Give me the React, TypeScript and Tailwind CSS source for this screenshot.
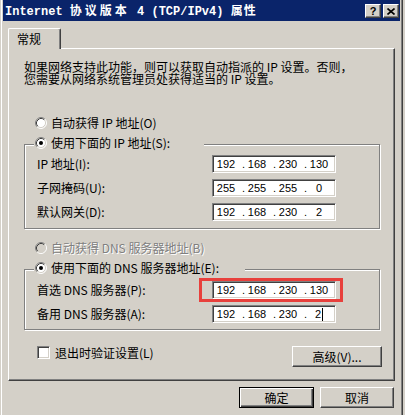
import React from "react";

function Radio({ checked, disabled }: { checked?: boolean; disabled?: boolean }) {
  return (
    <svg width="12" height="12" viewBox="0 0 12 12" className="shrink-0 block">
      <circle cx="6" cy="6" r="5" fill={disabled ? "#d4d0c8" : "#ffffff"} />
      <path d="M2.11 9.89A5.5 5.5 0 0 1 9.89 2.11" stroke="#808080" fill="none" />
      <path d="M9.89 2.11A5.5 5.5 0 0 1 2.11 9.89" stroke="#ffffff" fill="none" />
      <path d="M2.82 9.18A4.5 4.5 0 0 1 9.18 2.82" stroke="#404040" fill="none" />
      <path d="M9.18 2.82A4.5 4.5 0 0 1 2.82 9.18" stroke="#d4d0c8" fill="none" />
      {checked && <circle cx="6" cy="6" r="2" fill="#000000" />}
    </svg>
  );
}

function IpField({ parts, cursor }: { parts: string[]; cursor?: boolean }) {
  return (
    <div className="w-[124px] h-[18px] shrink-0 bg-white border border-t-[#808080] border-l-[#808080] border-r-white border-b-white shadow-[inset_1px_1px_0_#404040,inset_-1px_-1px_0_#d4d0c8] flex items-center pl-[2px] font-['Liberation_Sans',sans-serif] text-[11px] leading-[13px] text-black">
      {parts.map((p, i) => (
        <React.Fragment key={i}>
          <span className="w-[22px] flex justify-center items-center">
            {p}
            {cursor && i === 3 && <span className="inline-block w-[1px] h-[13px] bg-black ml-[1px]" />}
          </span>
          {i < 3 && <span className="w-[9px] pl-[5px] text-left">.</span>}
        </React.Fragment>
      ))}
    </div>
  );
}

function Row({ label, parts, cursor, children }: { label: string; parts: string[]; cursor?: boolean; children?: React.ReactNode }) {
  return (
    <div className="flex items-center h-[18px]">
      <div className="w-[187px] pl-[12px] leading-[12px]">{label}</div>
      <div className="relative">
        <IpField parts={parts} cursor={cursor} />
        {children}
      </div>
    </div>
  );
}

const btn =
  "flex items-center justify-center bg-[#d4d0c8] border border-t-white border-l-white border-r-[#404040] border-b-[#404040] shadow-[inset_-1px_-1px_0_#808080] leading-[12px]";

export default function App() {
  return (
    <div className="w-[405px] h-[415px] overflow-hidden bg-[#d4d0c8] flex font-['Noto_Sans_CJK_SC',sans-serif] text-[12px] text-black">
      <div className="w-[403px] h-full flex flex-col px-[3px] shadow-[inset_1px_0_0_#d4d0c8,inset_2px_0_0_#ffffff,inset_-1px_0_0_#404040,inset_-2px_0_0_#808080]">
        {/* title bar */}
        <div className="h-[21px] bg-[#0a246a] flex items-center pl-[2px] pr-[1px]">
          <div className="flex-1 text-white font-bold font-['Liberation_Mono','Noto_Sans_CJK_SC',monospace] text-[12px] leading-[12px] pt-[2px] whitespace-pre">
            Internet <span className="tracking-[3px]">协议版本</span> 4 (TCP/IPv4) <span className="tracking-[1px]">属性</span>
          </div>
          <div className="flex gap-[2px] pt-[1px]">
            <div className={`${btn} w-[16px] h-[14px] font-['Liberation_Sans',sans-serif] font-bold text-[11px]`}>?</div>
            <div className={`${btn} w-[16px] h-[14px]`}>
              <svg width="8" height="7" viewBox="0 0 8 7" className="block">
                <path d="M0.5 0.5L7.5 6.5M7.5 0.5L0.5 6.5" stroke="#000" strokeWidth="1.6" />
              </svg>
            </div>
          </div>
        </div>

        {/* body */}
        <div className="flex flex-col pl-[5px] pt-[7px]">
          {/* tab */}
          <div className="relative z-10 -mb-[1px] w-[53px] h-[21px] bg-[#d4d0c8] border-l border-t border-r border-l-white border-t-white border-r-[#404040] shadow-[inset_-1px_0_0_#808080] rounded-t-[2px] pl-[8px] pt-[4px] leading-[12px]">
            常规
          </div>
          {/* panel */}
          <div className="w-[387px] h-[333px] border border-t-white border-l-white border-r-[#404040] border-b-[#404040] shadow-[inset_-1px_-1px_0_#808080] flex flex-col">
            <p className="mt-[12px] ml-[15px] leading-[12px]">
              如果网络支持此功能，则可以获取自动指派的 IP 设置。否则，
              <br />
              您需要从网络系统管理员处获得适当的 IP 设置。
            </p>

            <div className="mt-[32px] ml-[26px] h-[12px] flex items-center gap-[4px] leading-[12px]">
              <Radio />
              <span>自动获得 IP 地址(O)</span>
            </div>

            <fieldset className="mt-[8px] ml-[15px] w-[356px] border border-[#808080] shadow-[inset_1px_1px_0_#ffffff,1px_1px_0_#ffffff]">
              <legend className="ml-[9px] w-[170px] h-[15px] bg-[#d4d0c8] pl-[1px] flex items-start gap-[4px] leading-[12px]">
                <Radio checked />
                <span>使用下面的 IP 地址(S):</span>
              </legend>
              <div className="pt-[3px] pb-[7px] flex flex-col gap-[6px]">
                <Row label="IP 地址(I):" parts={["192", "168", "230", "130"]} />
                <Row label="子网掩码(U):" parts={["255", "255", "255", "0"]} />
                <Row label="默认网关(D):" parts={["192", "168", "230", "2"]} />
              </div>
            </fieldset>

            <div className="mt-[13px] ml-[26px] h-[12px] flex items-center gap-[4px] leading-[12px] text-[#808080] [text-shadow:1px_1px_0_#ffffff]">
              <Radio disabled />
              <span>自动获得 DNS 服务器地址(B)</span>
            </div>

            <fieldset className="mt-[8px] ml-[15px] w-[356px] border border-[#808080] shadow-[inset_1px_1px_0_#ffffff,1px_1px_0_#ffffff]">
              <legend className="ml-[9px] w-[211px] h-[15px] bg-[#d4d0c8] pl-[1px] flex items-start gap-[4px] leading-[12px]">
                <Radio checked />
                <span>使用下面的 DNS 服务器地址(E):</span>
              </legend>
              <div className="pt-[4px] pb-[6px] flex flex-col gap-[6px]">
                <Row label="首选 DNS 服务器(P):" parts={["192", "168", "230", "130"]}>
                  <div className="absolute -left-[13px] -top-[3px] w-[144px] h-[24px] border-[3px] border-[#e8403c] pointer-events-none" />
                </Row>
                <Row label="备用 DNS 服务器(A):" parts={["192", "168", "230", "2"]} cursor />
              </div>
            </fieldset>

            <div className="mt-[16px] ml-[28px] mr-[12px] flex justify-between items-start">
              <div className="flex items-center gap-[5px] h-[13px] leading-[12px]">
                <div className="w-[13px] h-[13px] bg-white border border-t-[#808080] border-l-[#808080] border-r-white border-b-white shadow-[inset_1px_1px_0_#404040,inset_-1px_-1px_0_#d4d0c8]" />
                <span>退出时验证设置(L)</span>
              </div>
              <div className={`${btn} w-[90px] h-[21px]`}>高级(V)...</div>
            </div>
          </div>

          {/* bottom buttons */}
          <div className="mt-[6px] w-[387px] flex justify-end gap-[6px] pr-[1px]">
            <div className="w-[75px] h-[21px] flex items-center justify-center bg-[#d4d0c8] border border-black shadow-[inset_1px_1px_0_#ffffff,inset_-1px_-1px_0_#404040,inset_-2px_-2px_0_#808080] leading-[12px]">
              确定
            </div>
            <div className={`${btn} w-[74px] h-[21px]`}>取消</div>
          </div>
        </div>
      </div>
      <div className="w-[2px] h-full bg-[#d4d0c8]" />
    </div>
  );
}
